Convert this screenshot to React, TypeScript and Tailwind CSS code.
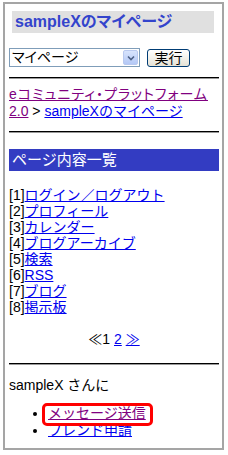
import React from "react";

const font = {
  fontFamily: '"Liberation Sans", "Noto Sans CJK JP", sans-serif',
};

const items = [
  "ログイン／ログアウト",
  "プロフィール",
  "カレンダー",
  "ブログアーカイブ",
  "検索",
  "RSS",
  "ブログ",
  "掲示板",
];

export default function App() {
  return (
    <div
      className="w-[228px] h-[455px] bg-white pt-[2px] pl-[3px] text-[14px] text-black"
      style={font}
    >
      <div className="relative w-[221px] h-[448px] border-2 border-[#a5a5a5] pl-[4px] pr-[3px] overflow-hidden">
        {/* title */}
        <div className="mt-[7px] ml-[3px] w-[202px] h-[22px] bg-[#e0e0e0] pl-[3px] text-[16px] leading-[22px] font-bold text-[#3344cc] [font-feature-settings:'palt']">
          sampleXのマイページ
        </div>

        {/* menu select */}
        <div className="mt-[15px] flex items-center h-[19px]">
          <div className="relative w-[131px] h-[19px] border border-[#7f9db9] bg-white">
            <div className="pl-[2px] leading-[17px] text-[14px] [font-feature-settings:'palt']">マイページ</div>
            <div className="absolute right-[1px] top-[1px] w-[15px] h-[15px] rounded-[2px] border border-[#b9c9ef] bg-gradient-to-b from-[#d8e4fc] to-[#b4c8f6] flex items-center justify-center">
              <svg width="8" height="6" viewBox="0 0 8 6">
                <path d="M1 1.5 L4 4.5 L7 1.5" fill="none" stroke="#4d6185" strokeWidth="1.6" />
              </svg>
            </div>
          </div>
          <button className="ml-[7px] w-[43px] h-[18px] rounded-[3px] border border-[#003c74] bg-gradient-to-b from-white to-[#e6e3d6] text-[14px] leading-[16px]">
            実行
          </button>
        </div>

        <div className="mt-[10px] border-t border-black border-b border-b-[#999]" />

        {/* breadcrumb */}
        <div className="mt-[7px] leading-[17px]">
          <a className="text-[#800080] underline">
            <span className="[font-feature-settings:'palt'] tracking-[1px]">
              eコミュニティ・プラットフォーム
            </span>{" "}
            2.0
          </a>
          <span> &gt; </span>
          <a className="text-[#0000ee] underline">sampleXのマイページ</a>
        </div>

        <div className="mt-[11px] border-t border-black border-b border-b-[#999]" />

        {/* section header */}
        <div className="mt-[16px] h-[22px] bg-[#333cc2] pl-[3px] text-[15px] leading-[22px] text-white">
          ページ内容一覧
        </div>

        {/* contents */}
        <div className="mt-[16px] leading-[16px]">
          {items.map((t, i) => (
            <div key={t}>
              [{i + 1}]<a className="text-[#0000ee] underline">{t}</a>
            </div>
          ))}
        </div>

        <div className="mt-[16px] text-center leading-[16px]">
          ≪1 <a className="text-[#0000ee] underline">2</a>{" "}
          <a className="text-[#0000ee] underline">≫</a>
        </div>

        <div className="mt-[16px] border-t border-black border-b border-b-[#999]" />

        <div className="mt-[12px] leading-[17px]">sampleX さんに</div>

        <ul className="mt-[11px] list-disc pl-[39px] leading-[17px]">
          <li>
            <a className="text-[#800080] underline">メッセージ送信</a>
          </li>
          <li>
            <a className="text-[#0000ee] underline">フレンド申請</a>
          </li>
        </ul>

        {/* highlight annotation */}
        <div className="absolute left-[37px] top-[399px] w-[111px] h-[23px] rounded-[5px] border-[3px] border-[#ff0000]" />
      </div>
    </div>
  );
}
